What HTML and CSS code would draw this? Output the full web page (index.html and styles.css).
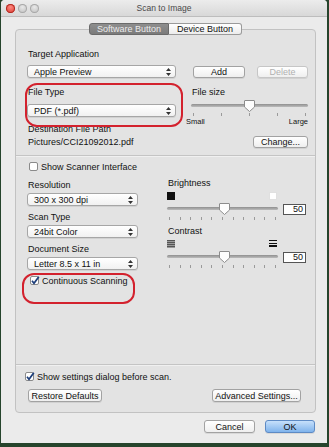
FILE: index.html
```html
<!DOCTYPE html>
<html lang="en">
<head>
    <meta charset="UTF-8">
    <title>Scan to Image</title>
    <link rel="stylesheet" href="styles.css">
</head>
<body>
<div class="window">
    <div class="titlebar">
        <div class="lights">
            <span class="light close"></span><span class="light"></span><span class="light"></span>
        </div>
        <div class="title">Scan to Image</div>
        <div class="lights-spacer"></div>
    </div>

    <div class="content">
        <div class="tabs">
            <span class="tab active">Software Button</span><span class="tab">Device Button</span>
        </div>

        <div class="group">
            <div class="label">Target Application</div>
            <div class="row app-row">
                <div class="popup app-popup">Apple Preview
                    <svg class="arrows" width="5" height="8" viewBox="0 0 5 8"><path d="M2.5 0L5 3H0Z M2.5 8L0 5H5Z" fill="#333"/></svg>
                </div>
                <button class="btn add-btn">Add</button>
                <button class="btn delete-btn" disabled>Delete</button>
            </div>

            <div class="row type-row">
                <div class="type-col">
                    <div class="label">File Type</div>
                    <div class="popup type-popup">PDF (*.pdf)
                        <svg class="arrows" width="5" height="8" viewBox="0 0 5 8"><path d="M2.5 0L5 3H0Z M2.5 8L0 5H5Z" fill="#333"/></svg>
                    </div>
                </div>
                <div class="size-col">
                    <div class="label">File size</div>
                    <div class="slider">
                        <div class="track"></div>
                        <svg class="thumb" style="left: 53px" width="11" height="12" viewBox="0 0 11 12"><path d="M1 .5H10A.5.5 0 0 1 10.5 1V7L5.5 11.5L.5 7V1A.5.5 0 0 1 1 .5Z" fill="#fdfdfd" stroke="#8c8c8c"/></svg>
                    </div>
                    <div class="ticks"><span></span><span></span><span></span><span></span><span></span></div>
                    <div class="range-labels"><span>Small</span><span>Large</span></div>
                </div>
            </div>

            <div class="label">Destination File Path</div>
            <div class="row path-row">
                <span class="path">Pictures/CCI21092012.pdf</span>
                <button class="btn change-btn">Change...</button>
            </div>

            <div class="separator"></div>

            <label class="check scanner-check">
                <svg width="10" height="10" viewBox="0 0 10 10"><rect x=".5" y=".5" width="8" height="8" rx="1.5" fill="#fff" stroke="#8a8a8a"/></svg>
                Show Scanner Interface
            </label>

            <div class="row settings">
                <div class="left-col">
                    <div class="label">Resolution</div>
                    <div class="popup small-popup">300 x 300 dpi
                        <svg class="arrows" width="5" height="8" viewBox="0 0 5 8"><path d="M2.5 0L5 3H0Z M2.5 8L0 5H5Z" fill="#333"/></svg>
                    </div>
                    <div class="label">Scan Type</div>
                    <div class="popup small-popup">24bit Color
                        <svg class="arrows" width="5" height="8" viewBox="0 0 5 8"><path d="M2.5 0L5 3H0Z M2.5 8L0 5H5Z" fill="#333"/></svg>
                    </div>
                    <div class="label">Document Size</div>
                    <div class="popup small-popup">Letter 8.5 x 11 in
                        <svg class="arrows" width="5" height="8" viewBox="0 0 5 8"><path d="M2.5 0L5 3H0Z M2.5 8L0 5H5Z" fill="#333"/></svg>
                    </div>
                    <label class="check continuous-check">
                        <svg width="10" height="10" viewBox="0 0 10 10"><rect x=".5" y=".5" width="8" height="8" rx="1.5" fill="#fff" stroke="#8a8a8a"/><path d="M2 4.8L4 7.3L8.8 .8" fill="none" stroke="#1d3e7a" stroke-width="1.7"/></svg>
                        Continuous Scanning
                    </label>
                </div>

                <div class="right-col">
                    <div class="label">Brightness</div>
                    <div class="icon-row">
                        <span class="sq dark"></span><span class="sq light-sq"></span>
                    </div>
                    <div class="slider-row">
                        <div class="slider wide">
                            <div class="track"></div>
                            <svg class="thumb" style="left: 52px" width="11" height="12" viewBox="0 0 11 12"><path d="M1 .5H10A.5.5 0 0 1 10.5 1V7L5.5 11.5L.5 7V1A.5.5 0 0 1 1 .5Z" fill="#fdfdfd" stroke="#8c8c8c"/></svg>
                        </div>
                        <div class="value">50</div>
                    </div>
                    <div class="ticks many"><span></span><span></span><span></span><span></span><span></span><span></span><span></span><span></span><span></span><span></span><span></span></div>

                    <div class="label contrast-label">Contrast</div>
                    <div class="icon-row">
                        <span class="sq lo"></span><span class="sq hi"></span>
                    </div>
                    <div class="slider-row">
                        <div class="slider wide">
                            <div class="track"></div>
                            <svg class="thumb" style="left: 52px" width="11" height="12" viewBox="0 0 11 12"><path d="M1 .5H10A.5.5 0 0 1 10.5 1V7L5.5 11.5L.5 7V1A.5.5 0 0 1 1 .5Z" fill="#fdfdfd" stroke="#8c8c8c"/></svg>
                        </div>
                        <div class="value">50</div>
                    </div>
                    <div class="ticks many"><span></span><span></span><span></span><span></span><span></span><span></span><span></span><span></span><span></span><span></span><span></span></div>
                </div>
            </div>

            <div class="separator"></div>

            <label class="check dialog-check">
                <svg width="10" height="10" viewBox="0 0 10 10"><rect x=".5" y=".5" width="8" height="8" rx="1.5" fill="#fff" stroke="#8a8a8a"/><path d="M2 4.8L4 7.3L8.8 .8" fill="none" stroke="#1d3e7a" stroke-width="1.7"/></svg>
                Show settings dialog before scan.
            </label>
            <div class="row bottom-buttons">
                <button class="btn restore-btn">Restore Defaults</button>
                <button class="btn advanced-btn">Advanced Settings...</button>
            </div>

            <!-- red marks drawn over the screenshot -->
            <div class="mark mark-type"></div>
            <div class="mark mark-continuous"></div>
        </div>

        <div class="footer">
            <button class="btn cancel-btn">Cancel</button>
            <button class="btn ok-btn">OK</button>
        </div>
    </div>
</div>
</body>
</html>
```

FILE: styles.css
```css
body {
    margin: 0;
    background-color: #26442c;
    font-family: "Liberation Sans", Arial, sans-serif;
    font-size: 9px;
    color: #111;
}
.window {
    width: 326px;
    height: 443px;
    margin-left: 1px;
    background-color: #ebebeb;
    border-radius: 4px 4px 0 0;
    overflow: hidden;
}
.titlebar {
    height: 17px;
    display: flex;
    align-items: center;
    background: linear-gradient(#ececec, #d8d8d8);
    border-bottom: 1px solid #bdbdbd;
    box-sizing: border-box;
}
.lights {
    width: 40px;
    padding-left: 5px;
    box-sizing: border-box;
    display: flex;
    gap: 3px;
}
.light {
    width: 9px;
    height: 9px;
    border-radius: 50%;
    background: radial-gradient(circle at 50% 35%, #e9e9e9, #b9b9b9);
    box-shadow: inset 0 0 0 1px #a9a9a9;
}
.light.close {
    background: radial-gradient(circle at 50% 35%, #ff8a80, #d8332b);
    box-shadow: inset 0 0 0 1px #b02a22;
}
.title {
    flex: 1;
    text-align: center;
    color: #4a4a4a;
    font-size: 8.5px;
}
.lights-spacer {
    width: 40px;
}
.content {
    margin: 0 11px 0 14px;
}
.tabs {
    display: flex;
    justify-content: center;
    margin-top: 6px;
    height: 12px;
    position: relative;
    z-index: 1;
}
.tab {
    display: flex;
    align-items: center;
    padding: 0 8px;
    border: 1px solid #9a9a9a;
    background: linear-gradient(#ffffff, #ececec);
}
.tab.active {
    background: linear-gradient(#8e8e8e, #7b7b7b);
    color: #ececec;
    border-color: #6a6a6a;
    border-radius: 3px 0 0 3px;
    padding: 0 7px;
}
.tab:last-child {
    border-left: none;
    border-radius: 0 3px 3px 0;
}
.group {
    position: relative;
    margin-top: -6px;
    border: 1px solid #c2c2c2;
    border-radius: 4px;
    background-color: #e3e3e3;
    padding: 19px 7px 10px 11px;
}
.label {
    line-height: 10px;
    height: 10px;
    padding-left: 1px;
}
.row {
    display: flex;
    align-items: center;
}
.popup {
    height: 13px;
    box-sizing: border-box;
    border: 1px solid #a6a6a6;
    border-radius: 3px;
    background: linear-gradient(#ffffff, #f1f1f1);
    box-shadow: 0 1px 0 rgba(0,0,0,0.08);
    display: flex;
    align-items: center;
    padding-left: 6px;
    position: relative;
}
.arrows {
    position: absolute;
    right: 4px;
    top: 2px;
}
.btn {
    font-family: inherit;
    font-size: 9px;
    color: #111;
    height: 12px;
    padding: 0;
    box-sizing: border-box;
    border: 1px solid #a2a2a2;
    border-radius: 3px;
    background: linear-gradient(#ffffff, #efefef);
    box-shadow: 0 1px 0 rgba(0,0,0,0.08);
}
.btn:disabled {
    color: #b0b0b0;
    border-color: #c6c6c6;
}
.app-row {
    margin-top: 6px;
}
.app-popup {
    width: 149px;
}
.add-btn {
    width: 52px;
    margin-left: 17px;
}
.delete-btn {
    width: 51px;
    margin-left: 12px;
}
.type-row {
    margin-top: 9px;
    height: 37px;
    align-items: flex-start;
}
.type-col {
    width: 149px;
}
.type-popup {
    margin-top: 7px;
}
.size-col {
    width: 117px;
    margin-left: 15px;
}
.slider {
    position: relative;
    height: 12px;
    margin-top: 3px;
}
.track {
    position: absolute;
    left: 0;
    right: 0;
    top: 4px;
    height: 3px;
    border-radius: 2px;
    background: linear-gradient(#8f8f8f, #bcbcbc);
}
.thumb {
    position: absolute;
    top: 0;
}
.ticks {
    display: flex;
    justify-content: space-between;
    padding: 0 2px;
    margin-top: 1px;
    height: 3px;
}
.ticks span {
    width: 1px;
    height: 3px;
    background-color: #9a9a9a;
}
.range-labels {
    display: flex;
    justify-content: space-between;
    font-size: 7.5px;
    line-height: 9px;
    margin-top: 1px;
    margin-left: -5px;
}
.path-row {
    margin-top: 2px;
    height: 12px;
    justify-content: space-between;
}
.path {
    padding-left: 1px;
}
.change-btn {
    width: 55px;
}
.separator {
    height: 1px;
    background-color: #c4c4c4;
    border-bottom: 1px solid #f0f0f0;
    margin: 7px -7px 0 -11px;
}
.check {
    display: flex;
    align-items: center;
    gap: 2px;
    height: 10px;
}
.check svg {
    overflow: visible;
}
.scanner-check {
    margin-top: 5px;
    margin-left: 2px;
}
.settings {
    margin-top: 6px;
    height: 179px;
    align-items: flex-start;
}
.left-col {
    width: 111px;
    padding-top: 2px;
}
.small-popup {
    margin-top: 3px;
    margin-bottom: 6px;
}
.continuous-check {
    margin-top: 3px;
    margin-left: 3px;
}
.right-col {
    width: 140px;
    margin-left: 29px;
}
.icon-row {
    display: flex;
    justify-content: space-between;
    width: 110px;
    margin-top: 4px;
    height: 8px;
}
.sq {
    width: 8px;
    height: 8px;
    box-sizing: border-box;
}
.sq.dark {
    background-color: #111;
}
.sq.light-sq {
    background-color: #fff;
    border: 1px solid #e0e0e0;
}
.sq.lo {
    background: repeating-linear-gradient(#555 0 1px, #9a9a9a 1px 2px);
}
.sq.hi {
    background: repeating-linear-gradient(#111 0 1.5px, transparent 1.5px 2.7px);
}
.slider-row {
    display: flex;
    align-items: center;
    margin-top: 3px;
}
.slider.wide {
    width: 111px;
    margin-top: 0;
}
.value {
    width: 23px;
    height: 11px;
    box-sizing: border-box;
    margin-left: 5px;
    border: 1px solid #555;
    background-color: #fff;
    text-align: right;
    line-height: 9px;
    padding-right: 2px;
}
.ticks.many {
    width: 111px;
    box-sizing: border-box;
    margin-top: 2px;
}
.contrast-label {
    margin-top: 6px;
}
.dialog-check {
    margin-top: 6px;
    margin-left: -2px;
}
.bottom-buttons {
    margin-top: 7px;
    justify-content: space-between;
}
.restore-btn {
    width: 74px;
    height: 13px;
    margin-left: 1px;
}
.advanced-btn {
    width: 89px;
    height: 13px;
    margin-right: 7px;
}
.mark {
    position: absolute;
    border: 2px solid #d3222e;
    border-radius: 12px;
    box-sizing: border-box;
}
.mark-type {
    left: 9px;
    top: 53px;
    width: 158px;
    height: 44px;
}
.mark-continuous {
    left: 6px;
    top: 243px;
    width: 113px;
    height: 31px;
}
.footer {
    display: flex;
    justify-content: flex-end;
    gap: 10px;
    margin-top: 7px;
    padding-right: 1px;
}
.cancel-btn {
    width: 51px;
    height: 13px;
}
.ok-btn {
    width: 50px;
    height: 13px;
    background: linear-gradient(#c6e0fb, #7fb3ec);
    border-color: #5d8ac4;
}
```
